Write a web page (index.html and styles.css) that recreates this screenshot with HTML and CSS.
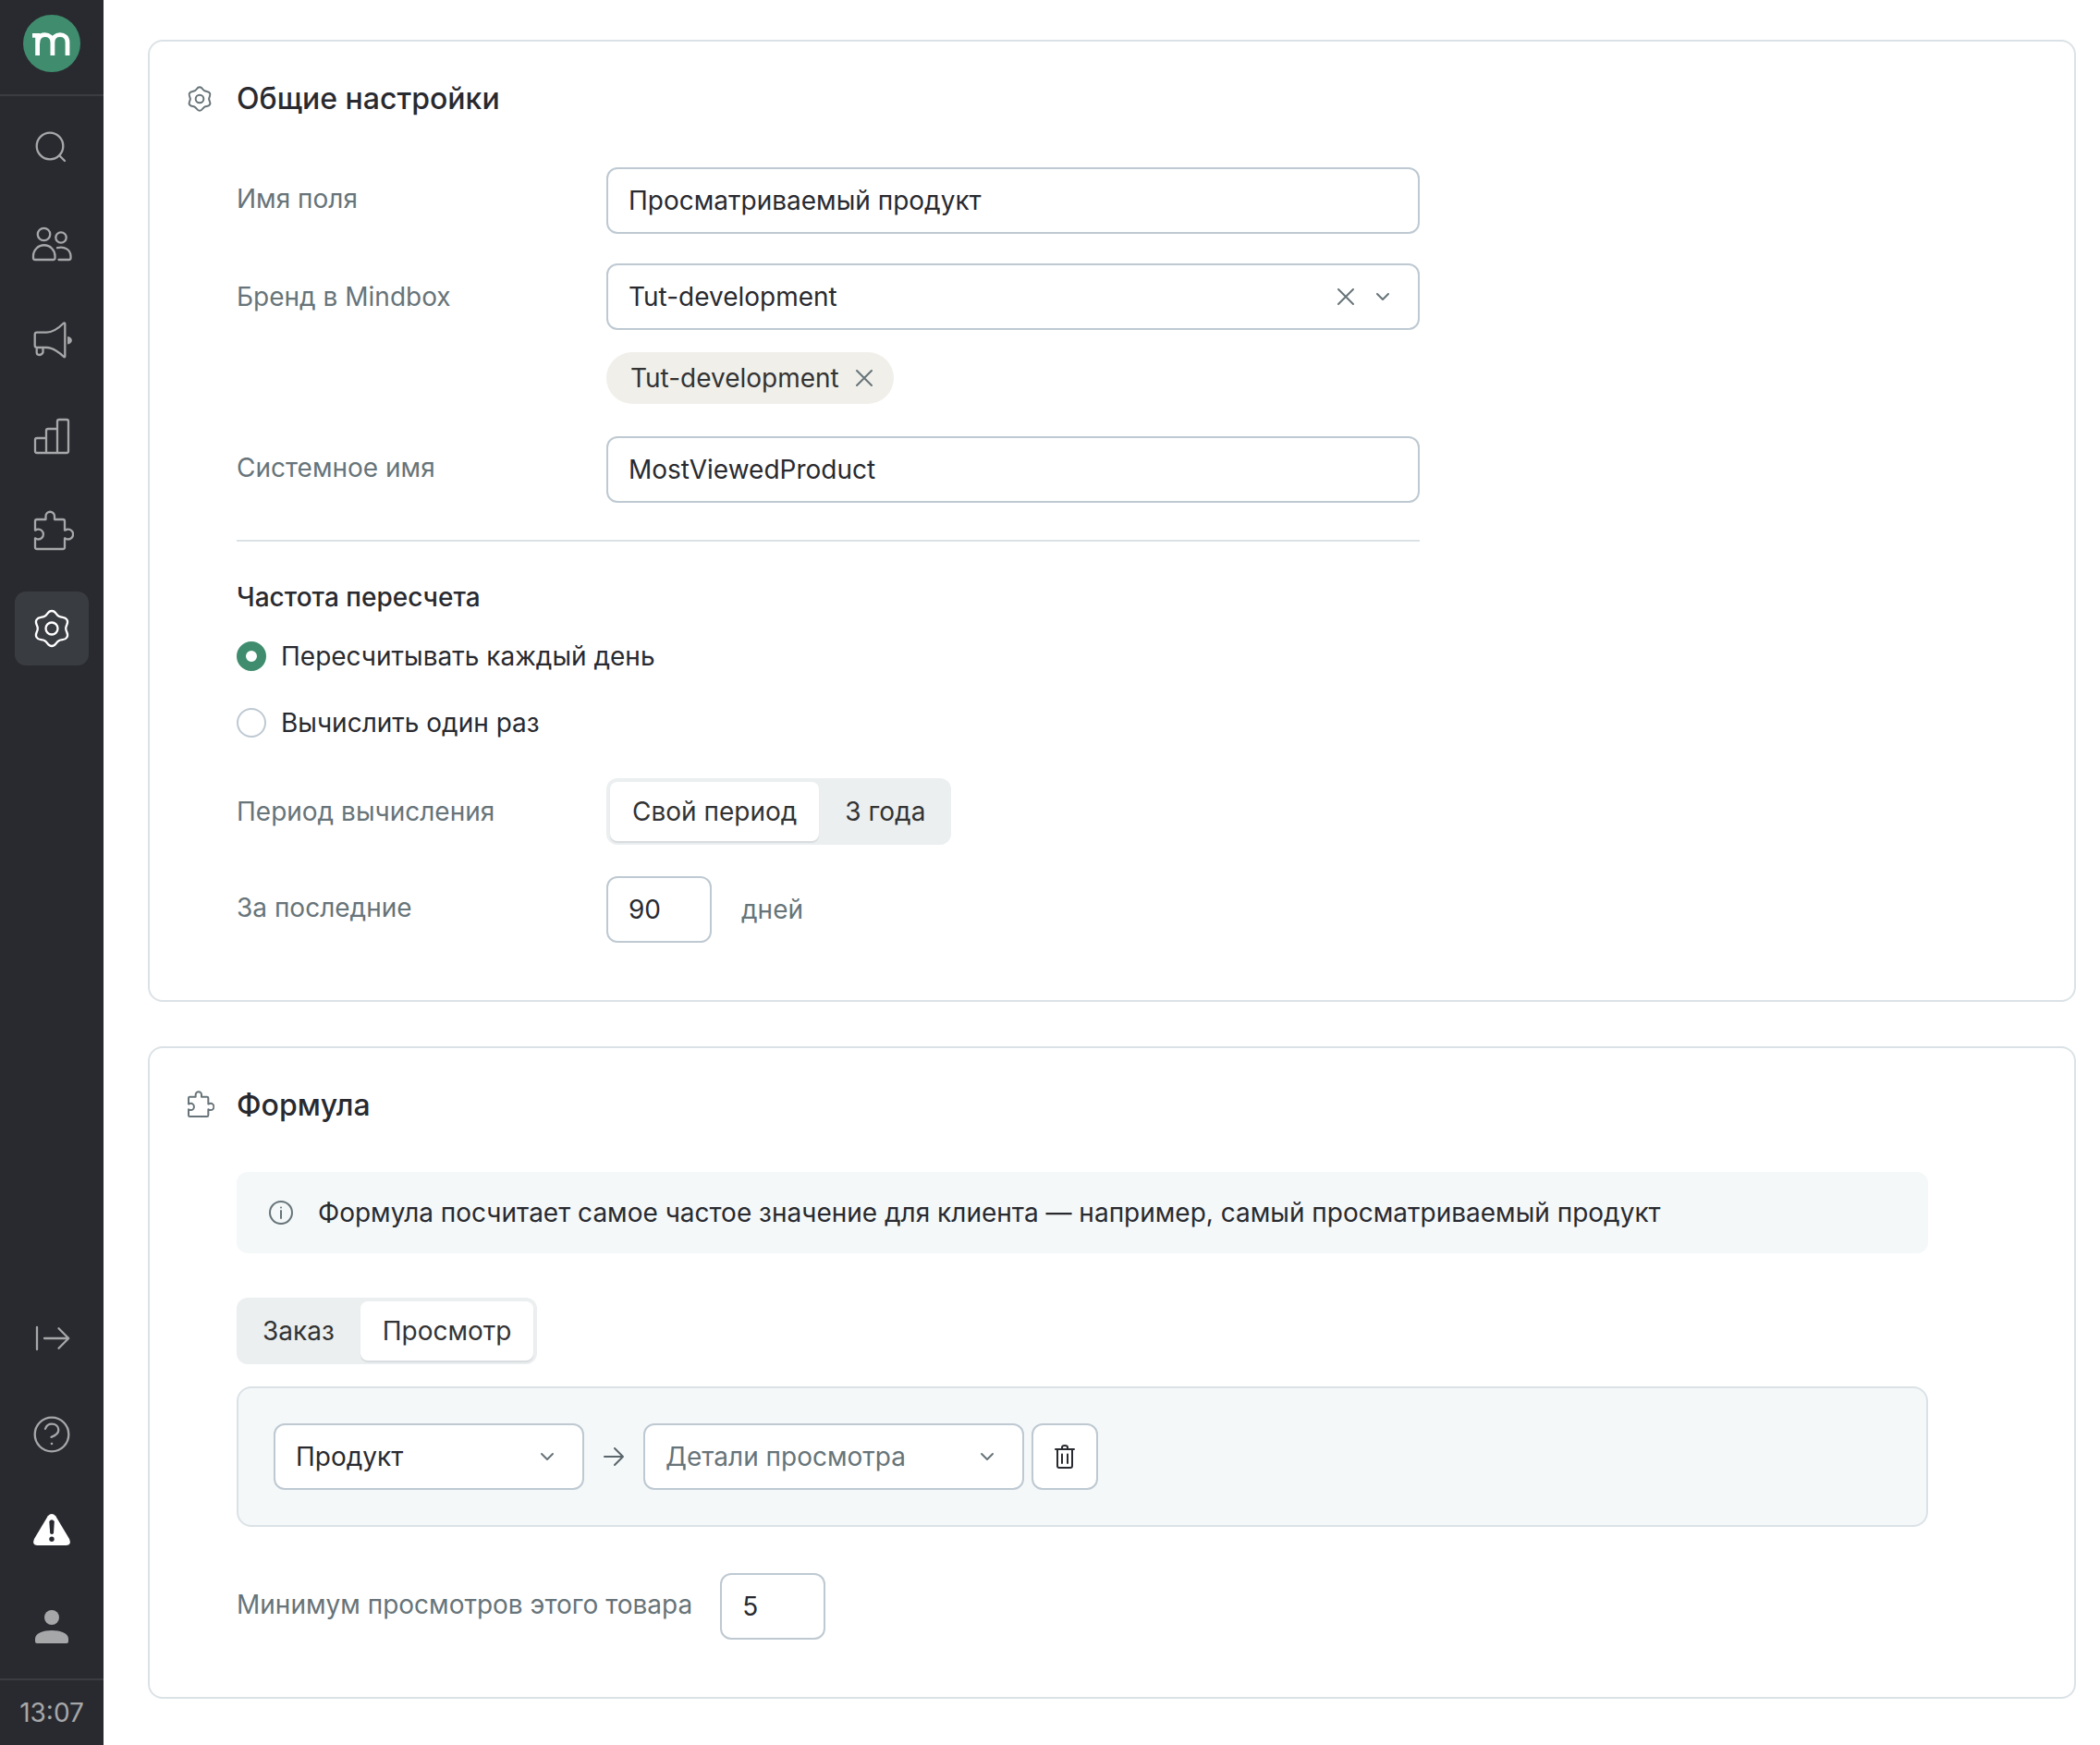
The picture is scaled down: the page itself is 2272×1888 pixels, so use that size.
FILE: index.html
```html
<!DOCTYPE html>
<html lang="ru">
<head>
<meta charset="utf-8">
<meta name="viewport" content="width=device-width, initial-scale=1">
<title>Просматриваемый продукт</title>
<link rel="stylesheet" href="styles.css">
</head>
<body>
<svg class="sprite" aria-hidden="true">
  <symbol id="gear" viewBox="0 0 48 48">
    <path transform="translate(24 24)" d="M0-19C4.500-19 4.140-15.160 7.600-13.160C11.060-11.160 14.200-13.400 16.450-9.500C18.700-5.600 15.200-4 15.200 0C15.200 4 18.700 5.600 16.450 9.500C14.200 13.400 11.060 11.160 7.600 13.160C4.140 15.160 4.500 19 0 19C-4.500 19-4.140 15.160-7.600 13.160C-11.060 11.160-14.200 13.400-16.450 9.500C-18.700 5.600-15.200 4-15.200 0C-15.200-4-18.700-5.600-16.450-9.500C-14.200-13.400-11.060-11.160-7.600-13.160C-4.140-15.160-4.500-19 0-19Z"/>
    <circle cx="24" cy="24" r="6.500"/>
  </symbol>
  <symbol id="puzzle" viewBox="0 0 48 48">
    <path d="M8 42q-2 0-2-2V30.500h.5q1 1 3 1a5.400 5.400 0 0 0 0-10.800q-2 0-3 1H6V12q0-2 2-2h9.500V6.500a4.700 4.700 0 0 1 9.500 0V10h9q2 0 2 2v9.700h.7q1-1 3-1a5.400 5.400 0 0 1 0 10.800q-2 0-3-1H38V40q0 2-2 2Z"/>
  </symbol>
  <symbol id="chevron" viewBox="0 0 24 24"><path d="M6 9l6 6 6-6"/></symbol>
  <symbol id="cross" viewBox="0 0 24 24"><path d="M4 4l16 16M20 4L4 20"/></symbol>
</svg>
<div class="app">
  <aside class="sidebar">
    <a class="logo" href="#" aria-label="Mindbox">
      <svg viewBox="0 0 62 62">
        <circle cx="31" cy="31" r="31" fill="#3f8d6e" stroke="none"/>
        <path d="M10 22.300H15.600V44M15.800 31C15.800 24.500 19 21.700 23.500 21.700S31.900 24.500 31.900 30V44M31.900 30C31.900 24.500 35.500 21.700 40 21.700S48 24.500 48 30V44" fill="none" stroke="#fff" stroke-width="4.800"/>
      </svg>
    </a>
    <nav class="nav">
      <a class="nav-item" href="#" aria-label="Поиск"><svg viewBox="0 0 48 48"><circle cx="22" cy="22" r="14.300"/><path d="M32.500 32.500L38 38"/></svg></a>
      <a class="nav-item" href="#" aria-label="Клиенты"><svg viewBox="0 0 48 48"><circle cx="15.500" cy="13.500" r="6.700"/><path d="M6 41q-2 0-2-2V37a11.750 11.750 0 0 1 23.500 0v2q0 2-2 2Z"/><circle cx="34" cy="17" r="5.700"/><path d="M30 28.200C38 26 44.500 30.500 44.500 37.500V39q0 2-2 2H31.500"/></svg></a>
      <a class="nav-item" href="#" aria-label="Кампании"><svg viewBox="0 0 48 48"><path d="M8 15.700H18.500C25 15.700 33 9.500 36.800 5.800Q38.300 5 38.300 6.500V41.500Q38.300 43 36.800 41.800C33 38 25 32 18.500 32H8Q5.700 32 5.700 29.700V18Q5.700 15.700 8 15.700ZM7.700 32V37.300Q7.700 40 10.500 40T14.500 37.300V32"/><path class="solid" d="M41 20C47.500 21 47.500 27.500 41 28.500Z"/></svg></a>
      <a class="nav-item" href="#" aria-label="Отчеты"><svg viewBox="0 0 48 48"><path d="M18 26H8Q6 26 6 28V40Q6 42 8 42H40Q42 42 42 40V8Q42 6 40 6H32Q30 6 30 8V42M30 16H20Q18 16 18 18V42"/></svg></a>
      <a class="nav-item" href="#" aria-label="Интеграции"><svg><use href="#puzzle"/></svg></a>
      <a class="nav-item nav-item--active" href="#" aria-label="Настройки" aria-current="page"><svg><use href="#gear"/></svg></a>
    </nav>
    <nav class="nav nav--bottom">
      <a class="nav-item" href="#" aria-label="Развернуть меню"><svg viewBox="0 0 48 48"><path d="M8 12V36M16 24H42M31.500 13.300L42.200 24L31.500 34.700"/></svg></a>
      <a class="nav-item" href="#" aria-label="Помощь"><svg viewBox="0 0 48 48"><circle cx="24" cy="24" r="18.300"/><path d="M17 17.800C18.300 14.200 21 12.600 24 12.600C28.500 12.600 31.300 15.500 31.300 19.300C31.300 23.500 28 25.200 23.500 26.800"/><circle class="solid" cx="24" cy="34" r="1.300"/></svg></a>
      <a class="nav-item nav-item--alert" href="#" aria-label="Предупреждения"><svg viewBox="0 0 48 48"><path fill="#fff" stroke="none" d="M19.800 8.300Q24 3.500 28.200 8.300L43 33Q46 40 39.500 40H8.500Q2 40 5 33Z"/><path fill="#292a2f" stroke="none" d="M21.300 14Q24 10.500 26.800 14L26 27Q24 29 22.200 27Z"/><circle fill="#292a2f" stroke="none" cx="24" cy="33.300" r="2.700"/></svg></a>
      <a class="nav-item" href="#" aria-label="Профиль"><svg viewBox="0 0 48 48"><circle class="solid" cx="24" cy="14" r="8"/><path class="solid" d="M6 37C6 31 15 28 24 28S42 31 42 37V40Q42 42 40 42H8Q6 42 6 40Z"/></svg></a>
    </nav>
    <time class="clock">13:07</time>
  </aside>

  <main class="content">
    <section class="card">
      <header class="card-header">
        <svg class="card-icon"><use href="#gear"/></svg>
        <h2>Общие настройки</h2>
      </header>
      <form class="card-body general">
        <div class="fields">
          <div class="field">
            <label class="label label--input" for="name">Имя поля</label>
            <input class="control" id="name" type="text" value="Просматриваемый продукт">
          </div>
          <div class="field">
            <label class="label" for="brand">Бренд в Mindbox</label>
            <div class="brand">
              <div class="select">
                <select class="control" id="brand"><option>Tut-development</option></select>
                <div class="select-icons">
                  <button class="icon-button" type="button" aria-label="Очистить"><svg><use href="#cross"/></svg></button>
                  <svg><use href="#chevron"/></svg>
                </div>
              </div>
              <span class="chip">Tut-development
                <button class="icon-button" type="button" aria-label="Удалить"><svg><use href="#cross"/></svg></button>
              </span>
            </div>
          </div>
          <div class="field">
            <label class="label label--input" for="system-name">Системное имя</label>
            <input class="control" id="system-name" type="text" value="MostViewedProduct">
          </div>
        </div>
        <hr class="divider">
        <fieldset class="radios">
          <legend>Частота пересчета</legend>
          <label class="radio"><input type="radio" name="frequency" checked>Пересчитывать каждый день</label>
          <label class="radio"><input type="radio" name="frequency">Вычислить один раз</label>
        </fieldset>
        <div class="fields fields--period">
          <div class="field">
            <span class="label" id="period-label">Период вычисления</span>
            <div class="segmented" role="group" aria-labelledby="period-label">
              <button class="segment segment--active" type="button" aria-pressed="true">Свой период</button>
              <button class="segment" type="button" aria-pressed="false">3 года</button>
            </div>
          </div>
          <div class="field">
            <label class="label label--input" for="days">За последние</label>
            <div class="with-unit">
              <input class="control control--number" id="days" type="text" inputmode="numeric" value="90">
              <span class="unit">дней</span>
            </div>
          </div>
        </div>
      </form>
    </section>

    <section class="card">
      <header class="card-header">
        <svg class="card-icon"><use href="#puzzle"/></svg>
        <h2>Формула</h2>
      </header>
      <form class="card-body">
        <p class="info">
          <svg viewBox="0 0 28 28"><circle cx="14" cy="14" r="12"/><path d="M14 12V20"/><circle class="solid" cx="14" cy="8.500" r="1"/></svg>
          Формула посчитает самое частое значение для клиента — например, самый просматриваемый продукт
        </p>
        <div class="segmented" role="group" aria-label="Источник">
          <button class="segment" type="button" aria-pressed="false">Заказ</button>
          <button class="segment segment--active" type="button" aria-pressed="true">Просмотр</button>
        </div>
        <div class="rule">
          <div class="select select--entity">
            <select class="control" aria-label="Сущность"><option>Продукт</option></select>
            <div class="select-icons"><svg><use href="#chevron"/></svg></div>
          </div>
          <svg class="rule-arrow" viewBox="0 0 24 24"><path d="M2 12H22M13 3L22 12L13 21"/></svg>
          <div class="select select--detail">
            <select class="control control--empty" aria-label="Детали"><option>Детали просмотра</option></select>
            <div class="select-icons"><svg><use href="#chevron"/></svg></div>
          </div>
          <button class="delete" type="button" aria-label="Удалить правило">
            <svg viewBox="0 0 32 32"><path d="M6 8H26M8 8V26Q8 28 10 28H22Q24 28 24 26V8M13 8V6Q13 4 16 4T19 6V8M13 13.500V23M19 13.500V23"/></svg>
          </button>
        </div>
        <div class="minimum">
          <label class="label label--input" for="minimum">Минимум просмотров этого товара</label>
          <input class="control control--number" id="minimum" type="text" inputmode="numeric" value="5">
        </div>
      </form>
    </section>
  </main>
</div>
</body>
</html>
```

FILE: styles.css
```css
:root {
  --text: #292a2f;
  --muted: #677479;
  --border: #bec9d2;
  --line: #dbe2e6;
  --tint: #f4f8f9;
  --green: #3f8d6e;
}

*, *::before, *::after { box-sizing: border-box; }

body {
  margin: 0;
  background: #fff;
  color: var(--text);
  font: 400 28px/40px Inter, "Liberation Sans", sans-serif;
}

svg {
  display: block;
  fill: none;
  stroke: currentColor;
  stroke-width: 2;
  stroke-linecap: round;
  stroke-linejoin: round;
}
.solid { fill: currentColor; stroke: none; }
.sprite { display: none; }

button, input, select { font: inherit; color: inherit; }
button { padding: 0; border: 0; background: none; cursor: pointer; }

.app { display: flex; min-height: 100vh; }

/* Sidebar */
.sidebar {
  position: sticky;
  top: 0;
  display: flex;
  flex: none;
  flex-direction: column;
  width: 112px;
  height: 100vh;
  background: #292a2f;
  color: #a6a7a9;
}
.logo {
  display: flex;
  justify-content: center;
  padding: 16px 0 24px;
  border-bottom: 2px solid #3b3c41;
}
.logo svg { width: 62px; height: 62px; stroke-linecap: butt; stroke-linejoin: miter; }
.nav {
  display: flex;
  flex-direction: column;
  align-items: center;
  gap: 24px;
  padding: 16px 0;
}
.nav--bottom { margin-top: auto; }
.nav-item {
  display: grid;
  place-items: center;
  width: 80px;
  height: 80px;
  border-radius: 12px;
  color: inherit;
}
.nav-item svg { width: 48px; height: 48px; stroke-width: 2.3; }
.nav-item--active { background: #393c41; color: #fff; }
.clock {
  border-top: 2px solid #3b3c41;
  line-height: 70px;
  text-align: center;
}

/* Cards */
.content {
  display: flex;
  flex: 1;
  flex-direction: column;
  gap: 48px;
  min-width: 0;
  padding: 43px 26px 50px 48px;
}
.card {
  padding: 38px 158px 62px 38px;
  border: 2px solid var(--line);
  border-radius: 16px;
}
.card-header {
  display: flex;
  align-items: center;
  gap: 24px;
  margin-bottom: 48px;
}
.card-header h2 { margin: 0; font-size: 32px; line-height: 48px; font-weight: 500; }
.card-icon { width: 32px; height: 32px; color: var(--muted); stroke-width: 3; }
.card-body { padding-left: 56px; }
.general { max-width: 1336px; padding-top: 2px; }

/* Fields */
.fields { display: grid; gap: 32px; }
.fields--period { gap: 34px; margin-top: 40px; }
.field { display: grid; grid-template-columns: 400px 1fr; align-items: start; }
.label { color: var(--muted); line-height: 72px; }
.label--input { line-height: 68px; }
.control {
  width: 100%;
  height: 72px;
  margin: 0;
  padding: 0 22px;
  border: 2px solid var(--border);
  border-radius: 12px;
  background: #fff;
  color: var(--text);
  appearance: none;
}
.control--number { width: 114px; }
.control--empty { color: var(--muted); }

.select { display: grid; align-items: center; }
.select > * { grid-area: 1 / 1; }
.select-icons {
  display: flex;
  gap: 16px;
  justify-self: end;
  padding-right: 28px;
  color: var(--muted);
  pointer-events: none;
}
.select-icons svg, .icon-button svg { width: 24px; height: 24px; }
.icon-button { color: var(--muted); pointer-events: auto; }

.chip {
  display: inline-flex;
  align-items: center;
  gap: 15px;
  height: 56px;
  margin: 24px 0 3px;
  padding: 0 20px 0 26px;
  border-radius: 28px;
  background: #f0efea;
  color: #333;
}
.brand { display: grid; justify-items: start; }
.brand .select { width: 100%; }

.divider { margin: 40px 0; border: 0; border-top: 2px solid var(--line); }

.radios { display: grid; gap: 32px; margin: 0; padding: 0; border: 0; }
.radios legend { margin-bottom: 24px; padding: 0; font-weight: 500; }
.radio { display: flex; align-items: center; gap: 16px; }
.radio input {
  width: 32px;
  height: 32px;
  margin: 0;
  border: 2px solid var(--border);
  border-radius: 50%;
  appearance: none;
}
.radio input:checked { border: 10px solid var(--green); }

.segmented {
  display: flex;
  gap: 4px;
  width: max-content;
  padding: 4px;
  border-radius: 12px;
  background: #ebeff0;
}
.segment {
  height: 64px;
  padding: 0 24px;
  border-radius: 8px;
  color: #333;
}
.segment--active { background: #fff; box-shadow: 0 2px 1px #d8dcde; }

.with-unit { display: flex; gap: 32px; }
.unit { color: var(--muted); line-height: 72px; }

/* Formula */
.info {
  display: flex;
  align-items: center;
  gap: 26px;
  margin: 0 0 48px;
  padding: 24px 34px;
  border-radius: 12px;
  background: var(--tint);
}
.info svg { flex: none; width: 28px; height: 28px; color: var(--muted); }
.rule {
  display: flex;
  align-items: center;
  margin-top: 24px;
  padding: 38px;
  border: 2px solid var(--line);
  border-radius: 16px;
  background: var(--tint);
}
.select--entity { width: 336px; }
.select--detail { width: 412px; }
.rule-arrow { width: 24px; height: 24px; margin: 0 20px; color: #5a666b; }
.delete {
  display: grid;
  place-items: center;
  width: 72px;
  height: 72px;
  margin-left: 8px;
  border: 2px solid var(--border);
  border-radius: 12px;
  background: #fff;
}
.delete svg { width: 32px; height: 32px; }
.minimum { display: flex; gap: 30px; margin-top: 50px; }
```
